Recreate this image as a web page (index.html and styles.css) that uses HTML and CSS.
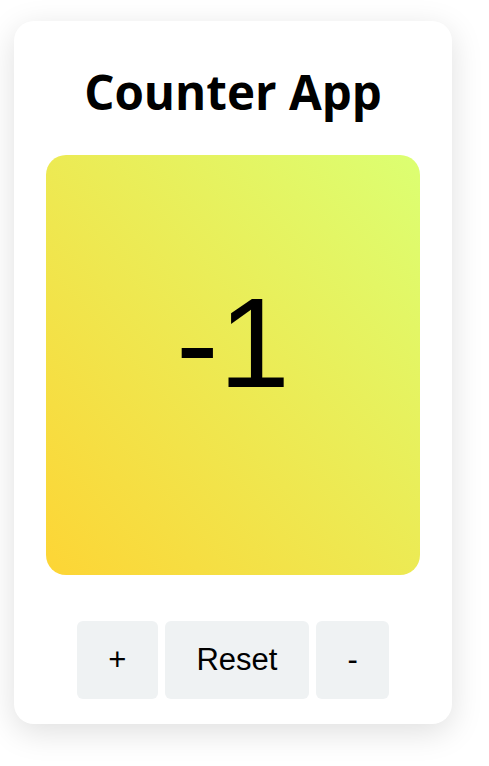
FILE: index.html
```html
<!DOCTYPE html>
<html lang="en">
<head>
<meta charset="utf-8">
<title>Counter App</title>
<link rel="stylesheet" href="styles.css">
</head>
<body>
<div class="card">
  <h1 class="title">Counter App</h1>
  <div class="display"><span class="count">-1</span></div>
  <div class="controls">
    <button class="btn">+</button>
    <button class="btn">Reset</button>
    <button class="btn">-</button>
  </div>
</div>
</body>
</html>
```
FILE: styles.css
```css
html, body {
  margin: 0;
  background: #ffffff;
}
body {
  padding: 21px 14px 60px;
}
.card {
  width: 438px;
  box-sizing: border-box;
  padding: 43px 32px 25px;
  background: #ffffff;
  border-radius: 20px;
  box-shadow: 0 8px 32px rgba(0, 0, 0, 0.13);
  display: flex;
  flex-direction: column;
}
.title {
  margin: 0;
  font-family: "Open Sans", "Noto Sans", sans-serif;
  font-weight: 700;
  font-size: 47.5px;
  line-height: 56px;
  text-align: center;
  color: #000;
}
.display {
  margin-top: 35px;
  height: 420px;
  box-sizing: border-box;
  padding-top: 124px;
  border-radius: 20px;
  background: linear-gradient(to top right, #fdd535, #dcff72);
  text-align: center;
}
.count {
  font-family: "Liberation Sans", Arial, sans-serif;
  font-size: 128px;
  line-height: 128px;
  color: #000;
}
.controls {
  margin-top: 46px;
  display: flex;
  justify-content: center;
  gap: 7px;
}
.btn {
  border: none;
  border-radius: 6px;
  background: #eff2f3;
  font-family: "Liberation Sans", Arial, sans-serif;
  font-size: 31px;
  padding: 21px 31.5px;
  color: #000;
  line-height: normal;
}
```
